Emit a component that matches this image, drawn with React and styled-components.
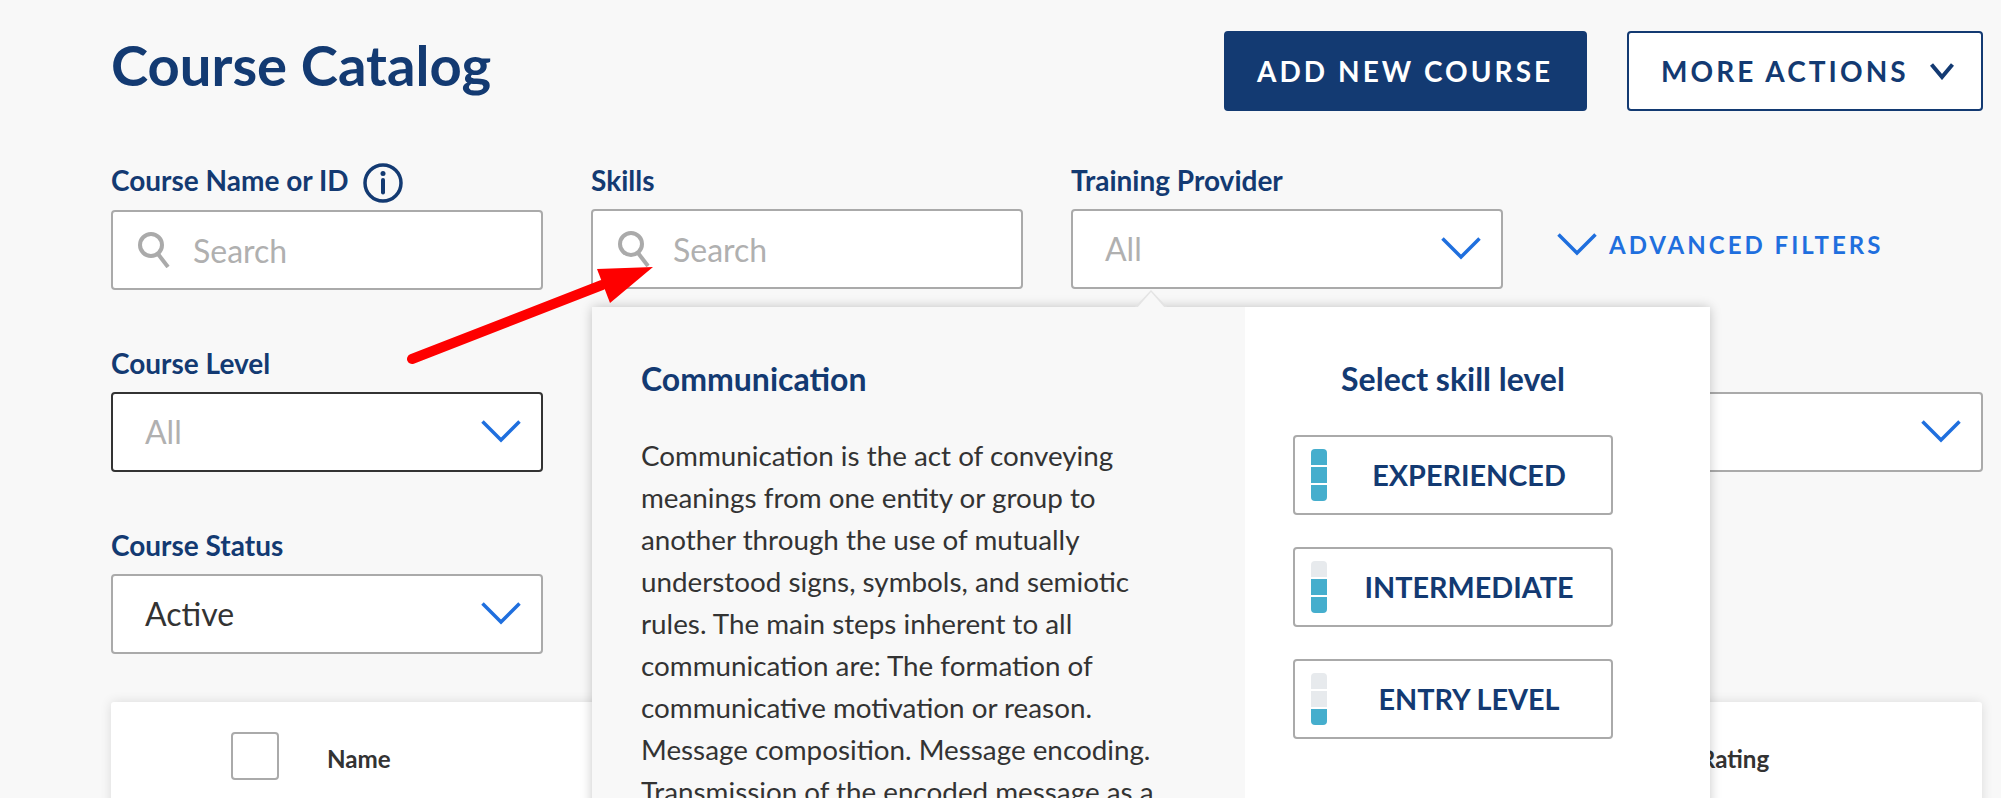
import React from 'react';
import styled, { createGlobalStyle } from 'styled-components';

const GlobalStyle = createGlobalStyle`
  html, body {
    margin: 0;
    height: 798px;
    overflow: hidden;
    background: #f8f8f8;
    font-family: Lato, "Open Sans", sans-serif;
  }
  * { box-sizing: border-box; }
`;

const navy = '#133a72';
const blue = '#1f6fde';

const Page = styled.div`
  position: relative;
  height: 798px;
  overflow: hidden;
  padding: 31px 18px 0 111px;
`;

const Header = styled.header`
  display: flex;
  align-items: center;
  justify-content: space-between;
  height: 80px;
`;

const Title = styled.h1`
  margin: -12px 0 0;
  font-size: 56.2px;
  line-height: 68px;
  font-weight: 700;
  color: ${navy};
`;

const Actions = styled.div`
  display: flex;
  gap: 40px;
`;

const ActionButton = styled.button`
  display: flex;
  align-items: center;
  height: 80px;
  width: ${({ $width }) => $width}px;
  padding: 0 0 0 ${({ $pad }) => $pad}px;
  gap: 21px;
  border: solid 2px ${navy};
  border-radius: 4px;
  background: ${({ $primary }) => ($primary ? navy : '#fff')};
  color: ${({ $primary }) => ($primary ? '#fff' : navy)};
  font-family: inherit;
  font-size: 28px;
  font-weight: 700;
  letter-spacing: 3.05px;
  white-space: nowrap;
`;

const Filters = styled.section`
  display: grid;
  grid-template-columns: repeat(4, 432px);
  column-gap: 48px;
  row-gap: 58.7px;
  margin-top: 54px;
`;

const Field = styled.div`
  position: relative;
  ${({ $col }) => $col && `grid-column: ${$col};`}
`;

const FieldLabel = styled.label`
  display: flex;
  align-items: center;
  gap: 14px;
  height: 30px;
  margin-bottom: ${({ $tall }) => ($tall ? 14.5 : 13.5)}px;
  font-size: 28px;
  font-weight: 700;
  color: ${navy};
  white-space: nowrap;
`;

const InputBox = styled.div`
  display: flex;
  align-items: center;
  height: 80px;
  padding: 0 ${({ $search }) => ($search ? 0 : 20)}px 0 ${({ $search }) => ($search ? 25 : 32)}px;
  border: solid 2px ${({ $focused }) => ($focused ? '#333' : '#aaa')};
  border-radius: 4px;
  background: #fff;
`;

const SearchInput = styled.input`
  flex: 1;
  min-width: 0;
  margin-left: 23px;
  padding: 2px 0 0;
  border: 0;
  outline: 0;
  background: transparent;
  font-family: inherit;
  font-size: 32px;
  color: #333;
  &::placeholder {
    color: #b0b0b0;
    opacity: 1;
  }
`;

const SelectValue = styled.span`
  flex: 1;
  font-size: 32px;
  color: ${({ $empty }) => ($empty ? '#b0b0b0' : '#333')};
`;

const AdvancedLink = styled.a`
  display: flex;
  align-items: center;
  gap: 12px;
  height: 79px;
  margin-top: 44px;
  padding: 0 0 8px 6px;
  font-size: 24px;
  font-weight: 700;
  letter-spacing: 3px;
  color: ${blue};
  white-space: nowrap;
`;

const Popover = styled.div`
  position: absolute;
  z-index: 2;
  top: calc(100% + 17.5px);
  left: 1px;
  display: grid;
  grid-template-columns: 653px 465px;
  width: 1118px;
  height: 520px;
  border-radius: 3px;
  box-shadow: 0 0 12px rgba(0, 0, 0, 0.22);
  &::before {
    content: '';
    position: absolute;
    top: -17px;
    left: 543px;
    border-style: solid;
    border-width: 0 16px 17px;
    border-color: transparent transparent #e4e4e4;
  }
  &::after {
    content: '';
    position: absolute;
    top: -15px;
    left: 545px;
    border-style: solid;
    border-width: 0 14px 16px;
    border-color: transparent transparent #f8f8f8;
  }
`;

const PopoverInfo = styled.div`
  padding: 53px 0 0 49px;
  background: #f8f8f8;
`;

const SkillTitle = styled.h3`
  margin: 0 0 37px;
  font-size: 32px;
  line-height: 38px;
  font-weight: 700;
  color: ${navy};
`;

const SkillText = styled.p`
  margin: 0;
  width: 520px;
  font-size: 27.8px;
  line-height: 42px;
  color: #333;
`;

const PopoverLevels = styled.div`
  display: flex;
  flex-direction: column;
  align-items: center;
  padding: 53px 49px 0 0;
  background: #fff;
  ${SkillTitle} {
    margin-bottom: 37px;
  }
`;

const LevelButton = styled.button`
  display: flex;
  align-items: center;
  width: 320px;
  height: 80px;
  margin-bottom: 32px;
  padding: 0 0 0 16px;
  border: solid 2px #aaa;
  border-radius: 4px;
  background: #fff;
  font-family: inherit;
  font-size: 28.8px;
  font-weight: 700;
  color: ${navy};
`;

const LevelName = styled.span`
  flex: 1;
  text-align: center;
`;

const LevelMeter = styled.span`
  display: flex;
  flex-direction: column;
  gap: 2px;
  width: 16px;
  border-radius: 4px;
  overflow: hidden;
`;

const LevelSegment = styled.i`
  display: block;
  height: 16px;
  background: ${({ $on }) => ($on ? '#45aecd' : '#e7eaed')};
`;

const TableCard = styled.section`
  display: flex;
  align-items: flex-start;
  width: 1871px;
  height: 200px;
  margin: 48.5px 0 0;
  padding: 30px 0 0 120px;
  border-radius: 3px;
  background: #fff;
  box-shadow: 0 0 12px rgba(0, 0, 0, 0.12);
`;

const Checkbox = styled.span`
  flex: none;
  width: 48px;
  height: 48px;
  border: solid 2px #aaa;
  border-radius: 4px;
  background: #fff;
`;

const ColumnHead = styled.span`
  margin-left: ${({ $left }) => $left}px;
  line-height: 54px;
  font-size: 24.2px;
  font-weight: 700;
  color: #333;
`;

const Callout = styled.svg`
  position: absolute;
  z-index: 3;
  top: 260px;
  left: 400px;
  width: 260px;
  height: 110px;
`;

const Chevron = ({ size = 40, height = 20, stroke = 3.5, color = blue }) => (
  <svg width={size} height={height + 3} viewBox={`0 0 ${size} ${height + 3}`} fill="none" style={{ flex: 'none' }}>
    <path d={`M1.5 1.5 L${size / 2} ${height} L${size - 1.5} 1.5`} stroke={color} strokeWidth={stroke} />
  </svg>
);

const SearchIcon = () => (
  <svg width="32" height="36" viewBox="0 0 32 36" fill="none" style={{ flex: 'none' }}>
    <circle cx="13" cy="13" r="11" stroke="#aaa" strokeWidth="4" />
    <path d="M20 22 L30 35" stroke="#aaa" strokeWidth="4" />
  </svg>
);

const InfoIcon = () => (
  <svg width="40" height="40" viewBox="0 0 40 40" fill="none" style={{ flex: 'none', marginTop: 6 }}>
    <circle cx="20" cy="20" r="18" stroke={navy} strokeWidth="3.5" />
    <circle cx="20" cy="10.5" r="2.5" fill={navy} />
    <path d="M20 17 V29.5" stroke={navy} strokeWidth="4" strokeLinecap="round" />
  </svg>
);

const levels = [
  { name: 'EXPERIENCED', on: 3 },
  { name: 'INTERMEDIATE', on: 2 },
  { name: 'ENTRY LEVEL', on: 1 },
];

const Level = ({ name, on }) => (
  <LevelButton>
    <LevelMeter>
      {[3, 2, 1].map((n) => (
        <LevelSegment key={n} $on={n <= on} />
      ))}
    </LevelMeter>
    <LevelName>{name}</LevelName>
  </LevelButton>
);

const Select = ({ value, empty, focused }) => (
  <InputBox $focused={focused}>
    <SelectValue $empty={empty}>{value}</SelectValue>
    <Chevron />
  </InputBox>
);

const Search = () => (
  <InputBox $search>
    <SearchIcon />
    <SearchInput placeholder="Search" />
  </InputBox>
);

export default function App() {
  return (
    <Page>
      <GlobalStyle />
      <Header>
        <Title>Course Catalog</Title>
        <Actions>
          <ActionButton $primary $width={363} $pad={31}>ADD NEW COURSE</ActionButton>
          <ActionButton $width={356} $pad={32}>
            MORE ACTIONS
            <Chevron size={24} height={14} stroke={4} color={navy} />
          </ActionButton>
        </Actions>
      </Header>

      <Filters>
        <Field>
          <FieldLabel $tall>Course Name or ID <InfoIcon /></FieldLabel>
          <Search />
        </Field>
        <Field>
          <FieldLabel>Skills</FieldLabel>
          <Search />
          <Popover>
            <PopoverInfo>
              <SkillTitle>Communication</SkillTitle>
              <SkillText>
                Communication is the act of conveying meanings from one entity or group to
                another through the use of mutually understood signs, symbols, and semiotic
                rules. The main steps inherent to all communication are: The formation of
                communicative motivation or reason. Message composition. Message encoding.
                Transmission of the encoded message as a
              </SkillText>
            </PopoverInfo>
            <PopoverLevels>
              <SkillTitle>Select skill level</SkillTitle>
              {levels.map((l) => <Level key={l.name} {...l} />)}
            </PopoverLevels>
          </Popover>
        </Field>
        <Field>
          <FieldLabel>Training Provider</FieldLabel>
          <Select value="All" empty />
        </Field>
        <Field>
          <AdvancedLink>
            <Chevron />
            ADVANCED FILTERS
          </AdvancedLink>
        </Field>

        <Field>
          <FieldLabel>Course Level</FieldLabel>
          <Select value="All" empty focused />
        </Field>
        <Field $col="4">
          <FieldLabel />
          <Select value="" empty />
        </Field>

        <Field>
          <FieldLabel>Course Status</FieldLabel>
          <Select value="Active" />
        </Field>
      </Filters>

      <TableCard>
        <Checkbox />
        <ColumnHead $left={48}>Name</ColumnHead>
        <ColumnHead $left={1309}>Rating</ColumnHead>
      </TableCard>

      <Callout viewBox="400 260 260 110">
        <path d="M412 359 L602 285" stroke="#fe0000" strokeWidth="10" strokeLinecap="round" fill="none" />
        <path d="M597 269 L653 267 L610 303 Z" fill="#fe0000" />
      </Callout>
    </Page>
  );
}
